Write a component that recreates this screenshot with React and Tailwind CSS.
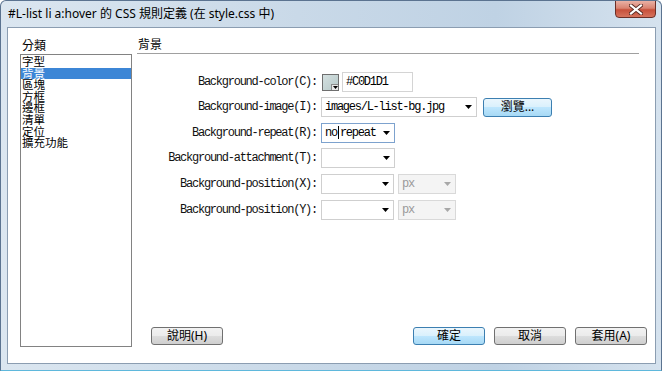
import React from 'react'

const cjk = "font-[family-name:'Noto_Sans','Noto_Sans_CJK_TC',sans-serif]"
const mono = "font-[family-name:'Liberation_Mono','Noto_Sans_CJK_TC',monospace] text-[12px] tracking-[-1.25px]"

function Arrow({ disabled = false }) {
  return (
    <svg width="7" height="4" viewBox="0 0 7 4" className="shrink-0">
      <path d="M0 0H7L3.5 4Z" fill={disabled ? '#a8a8a8' : '#000'} />
    </svg>
  )
}

function Combo({ width, children, focused = false, disabled = false }) {
  const border = focused ? 'border-[#7da2ce]' : disabled ? 'border-[#d9d9d9]' : 'border-[#cfcfcf]'
  return (
    <div
      className={`h-[20px] ${width} border ${border} ${disabled ? 'bg-[#f4f4f4] text-[#9a9a9a]' : 'bg-white text-black'} flex items-center pl-[3px] pr-[4px] overflow-hidden`}
    >
      <div className={`flex-1 overflow-hidden whitespace-nowrap ${mono} leading-[18px]`}>{children}</div>
      <Arrow disabled={disabled} />
    </div>
  )
}

function Button({ children, primary = false, width = 'w-[72px]', height = 'h-[18px]' }) {
  return (
    <button
      type="button"
      className={`${width} ${height} rounded-[3px] border ${
        primary
          ? 'border-[#3c7fb1] bg-[linear-gradient(to_bottom,#eaf6fd_0%,#d9f0fc_50%,#bee6fd_50%,#a7d9f5_100%)]'
          : 'border-[#707070] bg-[linear-gradient(to_bottom,#f2f2f2_0%,#ebebeb_50%,#dddddd_50%,#cfcfcf_100%)]'
      } ${cjk} text-[12px] leading-[16px] text-black flex items-center justify-center`}
    >
      {children}
    </button>
  )
}

const categories = ['字型', '背景', '區塊', '方框', '邊框', '清單', '定位', '擴充功能']

function Row({ label, mt, children }) {
  return (
    <div className={`flex items-center h-[20px] ${mt}`}>
      <div className={`w-[180px] text-right ${mono} text-[#111] whitespace-nowrap`}>{label}</div>
      <div className="ml-[4px] flex items-center">{children}</div>
    </div>
  )
}

export default function App() {
  return (
    <div className="w-[662px] h-[371px] flex flex-col overflow-hidden rounded-t-[6px] border border-[#5b7390] border-b-[#5fb8dc] bg-[linear-gradient(to_right,#dbe6f0_0%,#c9d9e8_45%,#bfd2e4_75%,#d5e2ee_100%)]">
      {/* title bar */}
      <div className="h-[26px] relative shrink-0">
        <div className={`absolute left-[7px] top-[5px] ${cjk} text-[12px] leading-[16px] text-black whitespace-nowrap`}>
          #L-list li a:hover 的 CSS 規則定義 (在 style.css 中)
        </div>
        <div className="absolute right-[5px] -top-[1px] w-[41px] h-[18px] rounded-b-[4px] border border-[#6b2f27] bg-[linear-gradient(to_bottom,#eab1a5_0%,#d98371_45%,#c7503b_55%,#d6735d_100%)] flex items-center justify-center">
          <svg width="14" height="11" viewBox="0 0 14 11">
            <path d="M2 1.5L12 9.5M12 1.5L2 9.5" stroke="#5a2a22" strokeWidth="4" strokeLinecap="square" />
            <path d="M2 1.5L12 9.5M12 1.5L2 9.5" stroke="#fff" strokeWidth="2.2" strokeLinecap="square" />
          </svg>
        </div>
      </div>

      {/* client area */}
      <div className="ml-[6px] mr-[5px] h-[337px] shrink-0 border border-[#8b9db1] bg-white flex">
        {/* categories */}
        <div className="ml-[12px] w-[112px] pt-[10px] flex flex-col">
          <div className={`h-[16px] ${cjk} text-[12px] leading-[16px] pl-[2px] text-black`}>分類</div>
          <div className="h-[293px] border border-[#828282] pt-[1px]">
            {categories.map((c, i) => (
              <div
                key={c}
                className={`h-[11.6px] leading-[11.6px] ${cjk} text-[11.5px] pl-[1px] ${
                  i === 1 ? 'bg-[#3c86d6] text-white' : 'text-black'
                }`}
              >
                {c}
              </div>
            ))}
          </div>
        </div>

        {/* panel */}
        <div className="ml-[5px] flex-1 mr-[8px] pt-[10px] pb-[18px] flex flex-col">
          <div className={`h-[16px] mr-[8px] border-b border-[#a0a0a0] ${cjk} text-[12px] leading-[14px] pl-[1px] text-black`}>背景</div>

          <div className="mt-[18px] flex flex-col">
            <Row label="Background-color(C):" mt="">
              <div className="ml-[1px] w-[17px] h-[17px] border border-[#6f6f6f] bg-[linear-gradient(135deg,#d4e0e0,#b7c9c9)] relative">
                <div className="absolute right-0 bottom-0 w-[7px] h-[6px] bg-[#e8e8e8] border-l border-t border-[#8a8a8a] flex items-center justify-center">
                  <svg width="5" height="3" viewBox="0 0 5 3">
                    <path d="M0 0H5L2.5 3Z" fill="#000" />
                  </svg>
                </div>
              </div>
              <div className={`ml-[3px] w-[71px] h-[20px] border border-[#d4d4d4] bg-white pl-[3px] ${mono} leading-[18px] text-black`}>
                #C0D1D1
              </div>
            </Row>
            <Row label="Background-image(I):" mt="mt-[5px]">
              <Combo width="w-[156px]">images/L-list-bg.jpg</Combo>
              <div className="ml-[6px]">
                <Button primary width="w-[69px]" height="h-[19px]">
                  瀏覽...
                </Button>
              </div>
            </Row>
            <Row label="Background-repeat(R):" mt="mt-[6px]">
              <Combo width="w-[74px]" focused>
                <span>no</span>
                <span className="inline-block w-px h-[13px] bg-black align-middle mx-[1px]" />
                <span>repeat</span>
              </Combo>
            </Row>
            <Row label="Background-attachment(T):" mt="mt-[5px]">
              <Combo width="w-[74px]" />
            </Row>
            <Row label="Background-position(X):" mt="mt-[6px]">
              <Combo width="w-[73px]" />
              <div className="ml-[4px]">
                <Combo width="w-[58px]" disabled>px</Combo>
              </div>
            </Row>
            <Row label="Background-position(Y):" mt="mt-[6px]">
              <Combo width="w-[73px]" />
              <div className="ml-[4px]">
                <Combo width="w-[58px]" disabled>px</Combo>
              </div>
            </Row>
          </div>

          <div className="mt-auto flex items-center">
            <div className="ml-[14px]">
              <Button>說明(H)</Button>
            </div>
            <div className="ml-auto flex gap-[9px]">
              <Button primary>確定</Button>
              <Button>取消</Button>
              <Button>套用(A)</Button>
            </div>
          </div>
        </div>
      </div>
    </div>
  )
}
